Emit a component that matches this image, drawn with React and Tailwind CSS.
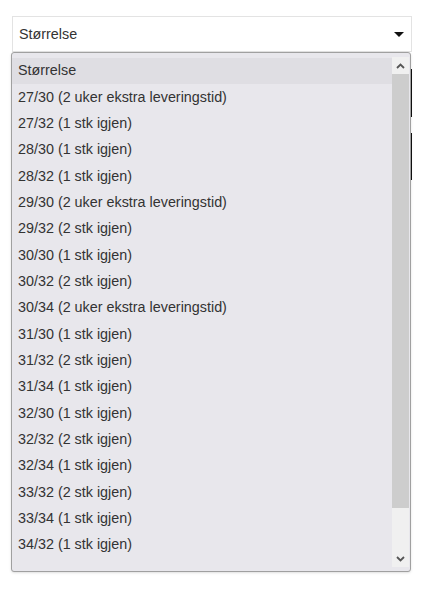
const SIZES = [
  "27/30 (2 uker ekstra leveringstid)",
  "27/32 (1 stk igjen)",
  "28/30 (1 stk igjen)",
  "28/32 (1 stk igjen)",
  "29/30 (2 uker ekstra leveringstid)",
  "29/32 (2 stk igjen)",
  "30/30 (1 stk igjen)",
  "30/32 (2 stk igjen)",
  "30/34 (2 uker ekstra leveringstid)",
  "31/30 (1 stk igjen)",
  "31/32 (2 stk igjen)",
  "31/34 (1 stk igjen)",
  "32/30 (1 stk igjen)",
  "32/32 (2 stk igjen)",
  "32/34 (1 stk igjen)",
  "33/32 (2 stk igjen)",
  "33/34 (1 stk igjen)",
  "34/32 (1 stk igjen)",
];

export default function App() {
  return (
    <div className="relative w-[444px] h-[590px] bg-white font-['Liberation_Sans',Arial,sans-serif] text-[14.35px] text-[#333]">
      <div className="pt-4 px-3">
        {/* Select */}
        <div className="relative h-[36px] w-[400px] border border-[#e3e3e3] bg-white flex items-center pl-[6px] pt-[2px]">
          <span>Størrelse</span>
          <span className="absolute right-[7px] top-[15px] w-0 h-0 border-l-[5px] border-r-[5px] border-t-[5px] border-l-transparent border-r-transparent border-t-[#111]" />
        </div>

        {/* Content behind dropdown */}
        <div className="mt-[17px] h-[48px] w-[400px] bg-[#111]" />
        <div className="mt-[16px] h-[47px] w-[400px] bg-[#111]" />
      </div>

      {/* Open option list */}
      <div className="absolute left-[11px] top-[52px] w-[400px] h-[520px] border border-[#a0a0a0] rounded-[3px] bg-[#e8e7ec] shadow-sm flex pt-[4px] pb-[4px]">
        <div className="flex-1 overflow-hidden pt-[1px]">
          <div className="h-[26.33px] flex items-center pl-[6px] bg-[#dfdee3]">Størrelse</div>
          {SIZES.map((s) => (
            <div key={s} className="h-[26.33px] flex items-center pl-[6px]">
              {s}
            </div>
          ))}
        </div>
        {/* Scrollbar */}
        <div className="w-[17px] mr-[1px] flex flex-col bg-[#f0f0f0]">
          <div className="h-[17px] flex items-center justify-center">
            <svg width="9" height="6" viewBox="0 0 9 6">
              <path d="M1 5 L4.5 1.5 L8 5" stroke="#555" strokeWidth="1.8" fill="none" />
            </svg>
          </div>
          <div className="h-[434px] bg-[#cdcdcd]" />
          <div className="flex-1" />
          <div className="h-[17px] flex items-center justify-center">
            <svg width="9" height="6" viewBox="0 0 9 6">
              <path d="M1 1 L4.5 4.5 L8 1" stroke="#555" strokeWidth="1.8" fill="none" />
            </svg>
          </div>
        </div>
      </div>
    </div>
  );
}
